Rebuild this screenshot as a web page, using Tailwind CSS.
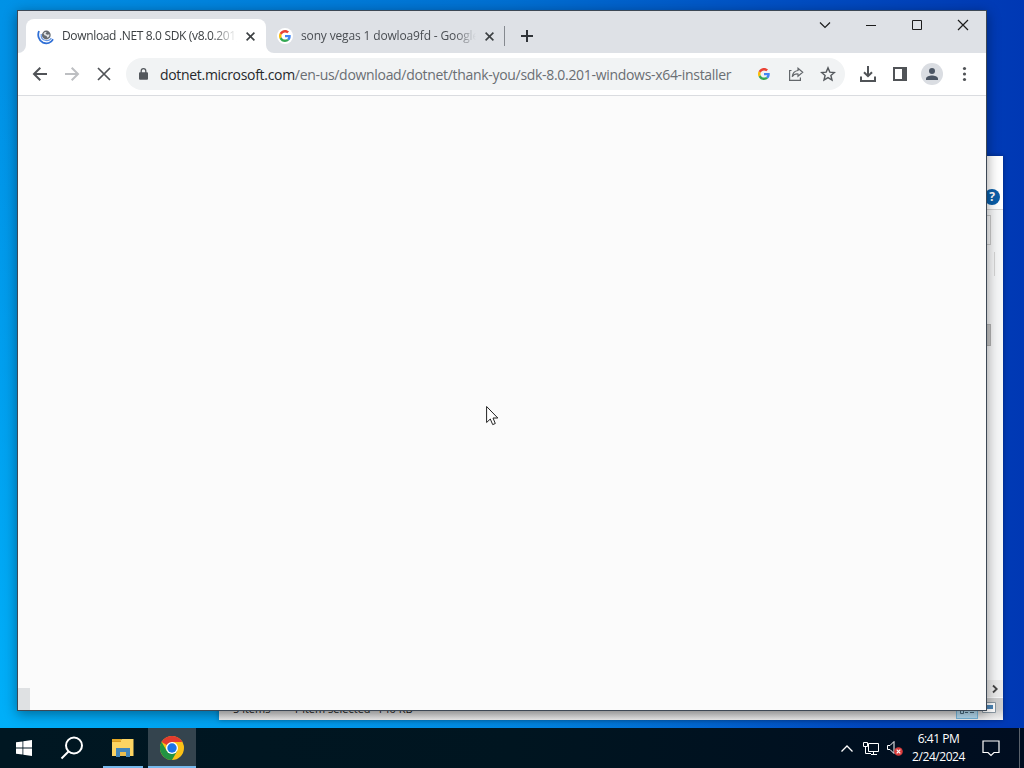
<!DOCTYPE html>
<html lang="en">
<head>
  <meta charset="UTF-8" />
  <meta name="viewport" content="width=device-width, initial-scale=1.0" />
  <title>Desktop</title>
  <script src="https://cdn.jsdelivr.net/npm/@tailwindcss/browser@4"></script>
</head>
<body class="relative w-[1024px] h-[768px] overflow-hidden font-['Open_Sans','Noto_Sans',sans-serif] bg-[linear-gradient(to_top_right,rgba(0,185,255,0.8),rgba(0,185,255,0)_45%),linear-gradient(to_right,#0092e6,#006fd2_50%,#0050c4_75%,#0038b4)]">

  <!-- Explorer window, behind the browser -->
  <section class="absolute left-[219px] top-[156px] w-[784px] h-[564px] bg-[#f5f6f7] shadow-[0_0_5px_rgba(0,0,0,0.35)] flex flex-col">
    <div class="h-[54px] bg-white border-b border-[#d4d4d4] flex items-end justify-end pr-[3px] pb-1">
      <div class="size-4 rounded-full bg-[#0a5ea8] text-white text-[12px] leading-4 font-bold text-center">?</div>
    </div>
    <div class="flex-1 flex flex-col items-end">
      <div class="mt-[5px] mr-3 w-8 h-[30px] border border-[#c9c9c9]"></div>
      <div class="mt-[7px] mr-2 w-8 h-6 border-r border-[#d5d5d5]"></div>
      <div class="mt-[48px] mr-3 w-4 h-[22px] bg-[#c6c6c6] border border-[#b2b2b2]"></div>
      <div class="flex-1"></div>
      <div class="w-[17px] h-[17px] mb-[1px] bg-[#eaeaea] flex items-center justify-center">
        <svg class="size-[10px]" viewBox="0 0 10 10" fill="none" stroke="#444" stroke-width="1.8"><path d="M3 1.5 6.7 5 3 8.5" /></svg>
      </div>
    </div>
    <div class="h-[22px] bg-linear-to-b from-[#cdcdcd] from-50% to-[#f0f0f0] flex text-[11px] leading-[22px] text-[#222] pl-[14px] pr-[7px]">
      <span class="w-[60px]">5 items</span>
      <span class="w-[84px] whitespace-nowrap">1 item selected</span>
      <span>140 KB</span>
      <div class="ml-auto flex">
        <div class="w-[22px] h-[21px] bg-[#b5dcf2] border border-[#77b7dc] flex items-center justify-center">
          <svg class="w-4 h-2 mt-2" viewBox="0 0 16 8" fill="none" stroke="#47677c"><path d="M1.500.500h3v4h-3zM6 3.500h3M11 3.500h4" /></svg>
        </div>
        <svg class="w-[14px] h-[11px] mt-1 ml-1" viewBox="0 0 14 11" fill="none"><path d="M.5.5h13v10H.5z" fill="#fff" stroke="#8a98a2" /><path d="M3 3h8v4H3z" fill="#4c84b5" /></svg>
      </div>
    </div>
  </section>

  <!-- Browser window -->
  <main class="absolute left-[17px] top-[10px] w-[970px] h-[701px] border border-[#3d4855] bg-[#fbfbfb] shadow-[0_3px_12px_rgba(0,0,0,0.4)] flex flex-col overflow-hidden">
    <!-- Tab strip -->
    <div class="h-[42px] shrink-0 bg-[#dee1e6] flex">
      <div class="relative mt-2 ml-2 w-[240px] h-[34px] rounded-t-lg bg-white flex items-center pl-[11px] text-[#3c4043]">
        <svg class="absolute -left-2 bottom-0 size-2" viewBox="0 0 8 8" fill="#fff"><path d="M8 0v8H0a8 8 0 0 0 8-8z" /></svg>
        <svg class="absolute -right-2 bottom-0 size-2" viewBox="0 0 8 8" fill="#fff"><path d="M0 0v8h8a8 8 0 0 1-8-8z" /></svg>
        <svg class="size-[18px]" viewBox="0 0 18 18" fill="none">
          <path d="M2 4C.3 8 1.500 13.500 6 15.600c4 1.700 8 .2 10-3.400" stroke="#2f6fd6" stroke-width="1.800" />
          <path d="M4.200 7c-.4 3.500 1.500 6 4.600 6.500 2.300.3 4.500-.7 5.500-2.500" stroke="#6797e3" stroke-width="1.200" />
          <circle cx="9.300" cy="8" r="4.400" fill="#666b70" />
          <path d="M6.500 6.500c1-1.500 2.200-1.800 3.200-1.500l-1.200 1.800 1.700 1 2.200-.5c.3 2-.8 3.200-2.200 3.500l-.6-1.800-2.200-.7z" fill="#dfe2e5" />
        </svg>
        <span class="ml-[7px] w-[175px] overflow-hidden whitespace-nowrap text-[12px] tracking-[-0.34px] mask-r-from-85%">Download .NET 8.0 SDK (v8.0.201)</span>
        <svg class="ml-[9px] size-[9px]" viewBox="0 0 9 9" fill="none" stroke="#3c4043" stroke-width="1.600"><path d="m.6.6 7.800 7.800m0-7.800L.6 8.400" /></svg>
      </div>
      <div class="mt-2 w-[239px] h-[34px] flex items-center pl-[11px] text-[#4a4e53]">
        <div class="size-4 rounded-full bg-white flex items-center justify-center">
          <svg class="size-3" viewBox="0 0 48 48">
            <path fill="#EA4335" d="M24 9.500c3.540 0 6.710 1.220 9.210 3.600l6.850-6.850C35.900 2.380 30.470 0 24 0 14.620 0 6.510 5.380 2.560 13.220l7.980 6.190C12.430 13.720 17.740 9.500 24 9.500z" />
            <path fill="#4285F4" d="M46.980 24.550c0-1.570-.15-3.090-.38-4.550H24v9.020h12.940c-.58 2.960-2.260 5.480-4.780 7.180l7.730 6c4.510-4.180 7.090-10.360 7.090-17.650z" />
            <path fill="#FBBC05" d="M10.530 28.590c-.48-1.450-.76-2.990-.76-4.590s.27-3.140.76-4.590l-7.980-6.190C.92 16.460 0 20.120 0 24c0 3.880.92 7.540 2.560 10.780l7.970-6.190z" />
            <path fill="#34A853" d="M24 48c6.480 0 11.930-2.130 15.890-5.810l-7.730-6c-2.150 1.450-4.920 2.300-8.160 2.300-6.260 0-11.570-4.220-13.470-9.910l-7.980 6.190C6.510 42.620 14.620 48 24 48z" />
          </svg>
        </div>
        <span class="ml-2 w-[175px] overflow-hidden whitespace-nowrap text-[12px] tracking-[-0.15px] mask-r-from-88%">sony vegas 1 dowloa9fd - Google Search</span>
        <svg class="ml-[9px] size-[9px]" viewBox="0 0 9 9" fill="none" stroke="#3c4043" stroke-width="1.600"><path d="m.6.6 7.800 7.800m0-7.800L.6 8.400" /></svg>
        <div class="ml-auto w-px h-5 bg-[#85898f] shrink-0"></div>
      </div>
      <svg class="mt-[19px] ml-4 size-3" viewBox="0 0 12 12" fill="none" stroke="#2f3338" stroke-width="2"><path d="M6 0v12M0 6h12" /></svg>
      <div class="ml-auto flex h-7 items-center text-[#1c1c1c]">
        <svg class="w-[46px] h-3" viewBox="0 0 46 12" fill="none" stroke="currentColor" stroke-width="1.200"><path d="m18 3.500 5 5 5-5" /></svg>
        <svg class="w-[46px] h-3" viewBox="0 0 46 12" fill="none" stroke="currentColor"><path d="M18 6.500h10" /></svg>
        <svg class="w-[46px] h-3" viewBox="0 0 46 12" fill="none" stroke="currentColor"><path d="M18.500 1.500h9v9h-9z" /></svg>
        <svg class="w-[46px] h-3" viewBox="0 0 46 12" fill="none" stroke="currentColor" stroke-width="1.200"><path d="m18 1 10 10m0-10L18 11" /></svg>
      </div>
    </div>

    <!-- Toolbar -->
    <div class="h-[43px] shrink-0 bg-white border-b border-[#dadce0] flex items-center text-[#54585d]">
      <div class="flex items-center gap-4 ml-[14px]">
        <svg class="size-4" viewBox="0 0 16 16" fill="none" stroke="#505357" stroke-width="2"><path d="M15 8H2.500M8.300 1.700 2 8l6.300 6.300" /></svg>
        <svg class="size-4" viewBox="0 0 16 16" fill="none" stroke="#bdbfc2" stroke-width="2"><path d="M1 8h12.500M7.700 1.700 14 8l-6.300 6.300" /></svg>
        <svg class="size-4" viewBox="0 0 16 16" fill="none" stroke="#505357" stroke-width="1.700"><path d="m2 2 12 12m0-12L2 14" /></svg>
      </div>
      <div class="ml-[14px] w-[719px] h-8 rounded-full bg-[#f1f3f4] flex items-center pl-[13px] pr-[9px]">
        <svg class="w-[9px] h-3" viewBox="0 0 9 12"><path d="M2.200 5V3a2.300 2.300 0 0 1 4.600 0v2" fill="none" stroke="#54585d" stroke-width="1.300" /><rect y="4.300" width="9" height="7.500" rx="1" fill="#54585d" /></svg>
        <div class="ml-[12px] whitespace-nowrap text-[14px] tracking-[-0.31px] text-[#6a6e73]"><span class="text-[#27292c]">dotnet.microsoft.com</span>/en-us/download/dotnet/thank-you/sdk-8.0.201-windows-x64-installer</div>
        <div class="ml-auto flex items-center gap-4">
          <svg class="size-4 p-[2px]" viewBox="0 0 48 48">
            <path fill="#EA4335" d="M24 9.500c3.540 0 6.710 1.220 9.210 3.600l6.850-6.850C35.900 2.380 30.470 0 24 0 14.620 0 6.510 5.380 2.560 13.220l7.980 6.190C12.430 13.720 17.740 9.500 24 9.500z" />
            <path fill="#4285F4" d="M46.980 24.550c0-1.570-.15-3.090-.38-4.550H24v9.020h12.940c-.58 2.960-2.260 5.480-4.780 7.180l7.730 6c4.510-4.180 7.090-10.360 7.090-17.650z" />
            <path fill="#FBBC05" d="M10.530 28.590c-.48-1.450-.76-2.990-.76-4.590s.27-3.140.76-4.590l-7.980-6.190C.92 16.460 0 20.120 0 24c0 3.880.92 7.540 2.560 10.780l7.970-6.190z" />
            <path fill="#34A853" d="M24 48c6.480 0 11.930-2.130 15.890-5.810l-7.730-6c-2.150 1.450-4.920 2.300-8.160 2.300-6.260 0-11.570-4.220-13.470-9.910l-7.980 6.190C6.510 42.620 14.620 48 24 48z" />
          </svg>
          <svg class="size-4" viewBox="0 0 16 16" fill="none" stroke="#63676b" stroke-width="1.200"><path d="M3.500 4.500H1.600v9.900h10.800v-2.800M10 2.200l4.700 4L10 10.200V8c-2.600-.2-4.500.7-5.800 2.700.4-3.500 2.300-5.700 5.800-6.200z" /></svg>
          <svg class="size-4" viewBox="0 0 16 16" fill="none" stroke="#54585d" stroke-width="1.400"><path d="m8 1.900 1.800 4.200 4.600.4-3.500 3 1.100 4.500-4-2.400L4 14l1.100-4.500-3.500-3 4.600-.4z" /></svg>
        </div>
      </div>
      <div class="ml-[15px] flex items-center">
        <svg class="size-4" viewBox="0 0 16 16" fill="none" stroke="#505357" stroke-width="2"><path d="M8 0v10M4 6.200l4 4 4-4M1 10.500V15h14v-4.500" /></svg>
        <svg class="ml-4 size-4" viewBox="0 0 16 16"><path d="M2 2h12v12H2z" fill="none" stroke="#505357" stroke-width="2" /><path d="M10 2h4v12h-4z" fill="#505357" /></svg>
        <div class="ml-[13px] size-[22px] rounded-full bg-[#dadde2] flex items-center justify-center">
          <svg class="size-3" viewBox="0 0 12 12" fill="#4b5563"><circle cx="6" cy="3" r="3" /><path d="M0 12v-1.500C0 8.500 3.500 7.400 6 7.400s6 1.100 6 3.100V12z" /></svg>
        </div>
        <svg class="ml-[13px] size-4" viewBox="0 0 16 16" fill="#505357"><circle cx="8.500" cy="2.500" r="1.600" /><circle cx="8.500" cy="8" r="1.600" /><circle cx="8.500" cy="13.500" r="1.600" /></svg>
      </div>
    </div>

    <!-- Page is still loading -->
    <div class="flex-1 flex items-end">
      <div class="w-3 h-[22px] bg-[#dfe1e3]"></div>
    </div>
  </main>

  <!-- Mouse pointer -->
  <svg class="absolute left-[486px] top-[405px] w-[13px] h-[21px]" viewBox="0 0 13 21"><path d="M.6 1.500v16l3.700-3.500 2.400 5.600 2.600-1.100L7 13h4.800z" fill="#fff" stroke="#222" stroke-width="1" /></svg>

  <!-- Taskbar -->
  <footer class="absolute left-0 bottom-0 w-full h-10 bg-linear-to-r from-[#001722] via-[#001520] to-[#000d20] flex text-white">
    <div class="w-12 flex items-center justify-center">
      <svg class="size-4" viewBox="0 0 16 16" fill="#fff"><path d="M0 2.300 6.500 1.400v6.100H0zM7.300 1.300 16 0v7.500H7.300zM0 8.400h6.500v6.200L0 13.700zM7.300 8.400H16V16l-8.700-1.300z" /></svg>
    </div>
    <div class="w-12 flex items-center justify-center">
      <svg class="size-6" viewBox="0 0 24 24" fill="none" stroke="#fff" stroke-width="2"><circle cx="14" cy="9.500" r="8" /><path d="m8.500 15.500-7 7" /></svg>
    </div>
    <div class="ml-[7px] w-10 flex flex-col items-center justify-end border-b-2 border-[#76b9ed]">
      <svg class="mb-[9px] w-[22px] h-[19px]" viewBox="0 0 22 19"><path d="M0 1h9l2 2H0z" fill="#e5a823" /><path d="M0 2.500h8l2-1.500h11.500v17H0z" fill="#fcd462" /><path d="M0 2.500h9v1.500H0z" fill="#d99b1f" /><path d="M4 10h14v9h-4v-5H8v5H4z" fill="#4386ba" /><path d="M8 14h6v4H8z" fill="#e9bd4e" /></svg>
    </div>
    <div class="ml-[5px] w-12 flex items-center justify-center bg-[#34444e] border-b-2 border-[#76b9ed]">
      <svg class="size-6 mt-[2px]" viewBox="0 0 24 24">
        <circle cx="12" cy="12" r="12" fill="#fbc116" />
        <path d="M12 12 1.600 6A12 12 0 0 1 22.400 6z" fill="#e33b2e" />
        <path d="M1.600 6A12 12 0 0 0 12 24l5.200-9L12 12 6.800 15z" fill="#229342" />
        <path d="M12 6h10.400L17.200 15 12 12z" fill="#fbc116" />
        <circle cx="12" cy="12" r="6" fill="#fff" /><circle cx="12" cy="12" r="4.700" fill="#1a73e8" />
      </svg>
    </div>
    <div class="ml-auto flex items-center">
      <svg class="w-3 h-[7px]" viewBox="0 0 12 7" fill="none" stroke="#fff" stroke-width="1.300"><path d="M.5 6.500 6 1l5.500 5.500" /></svg>
      <svg class="ml-[10px] w-[17px] h-[15px] mt-px" viewBox="0 0 17 15" fill="none" stroke="#fff"><path d="M5.500 2.500h10v8h-10zM8 13.500h6M10.500 11v2.500M.5 1.500h4v4h-4zM2.500 5.500v7H8" /></svg>
      <svg class="ml-[7px] w-4 h-[15px] mt-px" viewBox="0 0 16 15" fill="none"><path d="M.5 4.500h2.500l4-4v12l-4-4H.5z" stroke="#fff" /><circle cx="11.500" cy="10.500" r="4.300" fill="#d83b3b" /><path d="m9.700 8.700 3.600 3.600m0-3.600-3.600 3.600" stroke="#fff" stroke-width="1.200" /></svg>
      <div class="ml-[7px] mb-px w-[57px] text-center text-[12px] leading-[18px] tracking-[-0.45px] whitespace-nowrap">
        <div>6:41 PM</div>
        <div>2/24/2024</div>
      </div>
      <svg class="ml-[15px] w-[18px] h-[17px] mt-px" viewBox="0 0 18 17" fill="none" stroke="#fff" stroke-width="1.200"><path d="M1 1h16v11.500h-5L9 15.500l-3-3H1z" /></svg>
      <div class="ml-[19px] mr-1 w-px h-10 bg-[#5a626c]"></div>
    </div>
  </footer>
</body>
</html>
